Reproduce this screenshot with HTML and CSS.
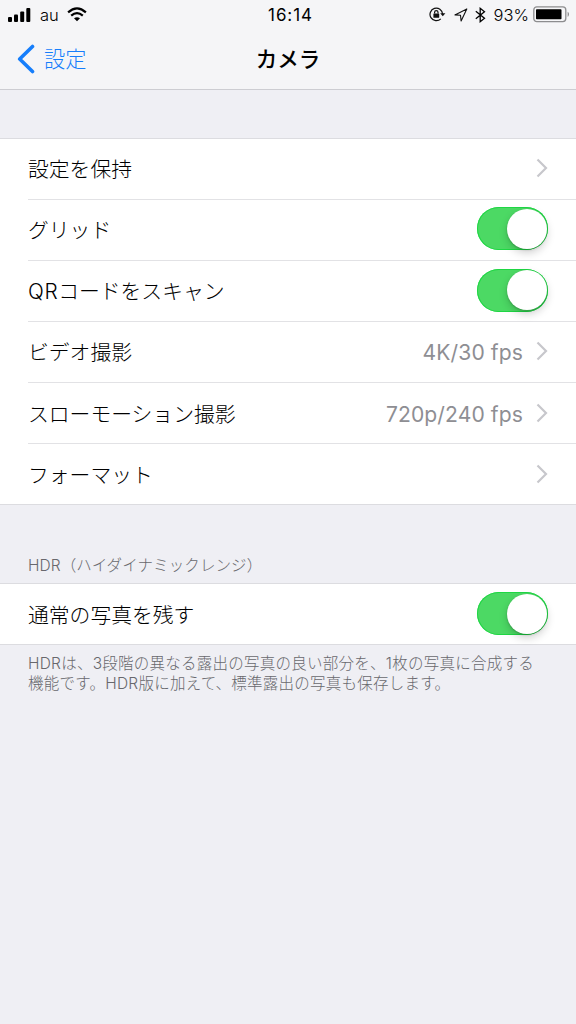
FILE: index.html
```html
<!DOCTYPE html>
<html lang="ja">
<head>
<meta charset="utf-8">
<title>カメラ</title>
<link rel="stylesheet" href="styles.css">
</head>
<body>
<header class="header">
  <div class="status">
    <div class="status-side">
      <svg class="signal" width="24" height="14" viewBox="0 0 24 14"><rect x="0" y="9" width="4" height="5" rx="1"/><rect x="6" y="6.500" width="4" height="7.500" rx="1"/><rect x="12.200" y="3.500" width="4" height="10.500" rx="1"/><rect x="18.300" y="0" width="4" height="14" rx="1"/></svg>
      <span class="carrier">au</span>
      <svg class="wifi" width="20" height="15" viewBox="0 0 20 15" fill="none" stroke="#000" stroke-width="2.200"><path d="M1.100 5.400Q10-2.700 18.900 5.400M4.200 8.700Q10 3.600 15.800 8.700"/><path d="M10 14.300L7 11.300Q10 9 13 11.300Z" fill="#000" stroke="none"/></svg>
    </div>
    <span class="clock">16:14</span>
    <div class="status-side status-end">
      <svg class="lock" width="17" height="15" viewBox="0 0 17 15" fill="none" stroke="#111" stroke-width="1.200"><path d="M11.800 11.800A6.300 6.300 0 1 1 13.600 7"/><path d="M11.200 6.200H16.400L13.800 9.200Z" fill="#111" stroke="none"/><rect x="4.400" y="6.400" width="5.800" height="4.300" rx=".5" fill="#111" stroke="none"/><path d="M5.600 6.600V5.300a1.700 1.700 0 0 1 3.400 0V6.600"/></svg>
      <svg class="location" width="14" height="14" viewBox="0 0 14 14" fill="none" stroke="#111" stroke-width="1.100" stroke-linejoin="round"><path d="M.9 6.900L12.800.9L7.100 13L6.500 7.200Z"/></svg>
      <svg class="bluetooth" width="11" height="16" viewBox="0 0 11 16" fill="none" stroke="#000" stroke-width="1.300"><path d="M.8 4.200L9.500 11.300L5.200 14.700V1.300L9.500 4.700L.8 11.800"/></svg>
      <span class="percent">93%</span>
      <svg class="battery" width="37" height="17" viewBox="0 0 37 17"><rect x=".8" y=".9" width="32" height="14.700" rx="3" fill="none" stroke="#8d8d8f" stroke-width="1.300"/><rect x="3" y="3.300" width="25.500" height="9.900" rx=".8"/><path d="M34.600 5.700C36.500 6.500 36.500 10 34.600 10.800Z" fill="#8d8d8f"/></svg>
    </div>
  </div>
  <nav class="nav">
    <a class="back"><svg width="18" height="30" viewBox="0 0 18 30" fill="none" stroke="#167efb" stroke-width="3.600" stroke-linecap="round" stroke-linejoin="round"><path d="M15.500 2.500L2.700 15L15.500 27.500"/></svg><span>設定</span></a>
    <h1 class="title">カメラ</h1>
  </nav>
</header>
<main>
  <section class="group">
    <div class="row"><span class="label">設定を保持</span><svg class="chevron" viewBox="0 0 12 20"><path d="M1.500 1.500L10 10L1.500 18.500"/></svg></div>
    <div class="row"><span class="label">グリッド</span><span class="switch"><span class="knob"></span></span></div>
    <div class="row"><span class="label"><span class="latin">QR</span>コードをスキャン</span><span class="switch"><span class="knob"></span></span></div>
    <div class="row"><span class="label">ビデオ撮影</span><span class="value">4K/30 fps</span><svg class="chevron" viewBox="0 0 12 20"><path d="M1.500 1.500L10 10L1.500 18.500"/></svg></div>
    <div class="row"><span class="label">スローモーション撮影</span><span class="value">720p/240 fps</span><svg class="chevron" viewBox="0 0 12 20"><path d="M1.500 1.500L10 10L1.500 18.500"/></svg></div>
    <div class="row"><span class="label">フォーマット</span><svg class="chevron" viewBox="0 0 12 20"><path d="M1.500 1.500L10 10L1.500 18.500"/></svg></div>
  </section>
  <h2 class="caption">HDR（ハイダイナミックレンジ）</h2>
  <section class="group">
    <div class="row"><span class="label">通常の写真を残す</span><span class="switch"><span class="knob"></span></span></div>
  </section>
  <p class="note">HDRは、3段階の異なる露出の写真の良い部分を、1枚の写真に合成する<br>機能です。HDR版に加えて、標準露出の写真も保存します。</p>
</main>
</body>
</html>
```
FILE: styles.css
```css
* { box-sizing: border-box; }
body {
  margin: 0;
  min-height: 1024px;
  background: #efeff4;
  color: #000;
  font-family: Inter, "Noto Sans CJK JP", sans-serif;
  font-weight: 300;
}
svg { display: block; flex: none; }
.header {
  height: 90px;
  background: #f5f5f7;
  border-bottom: 1px solid #cdcdd2;
}
.status {
  display: grid;
  grid-template-columns: 1fr auto 1fr;
  align-items: center;
  height: 29px;
  padding: 0 6px 0 8px;
  font-size: 17px;
  line-height: 29px;
}
.status-side { display: flex; align-items: center; }
.status-end { justify-content: flex-end; }
.carrier { margin: 1px 8px 0 8px; font-size: 16.500px; }
.signal, .wifi { margin-bottom: 1px; }
.clock { padding: 1px 0 0 3px; font-weight: 400; font-size: 17px; letter-spacing: .9px; }
.lock, .location { margin-bottom: 1px; }
.location { margin-left: 8px; }
.bluetooth { margin-left: 7px; margin-bottom: 1px; }
.percent { margin: 1px 4px 0 8px; font-size: 16.500px; }
.battery { margin-bottom: 1px; }
.nav {
  display: grid;
  grid-template-columns: 1fr auto 1fr;
  align-items: center;
  height: 60px;
  padding: 0 17px;
}
.back {
  display: flex;
  align-items: center;
  gap: 9px;
  color: #167efb;
  font-size: 21.200px;
  line-height: 30px;
}
.title { margin: 0; font-size: 21.500px; font-weight: 500; line-height: 30px; }
.group {
  background: #fff;
  border-top: 1px solid #dcdce0;
  border-bottom: 1px solid #dcdce0;
}
main { padding-top: 47.500px; }
.row {
  display: flex;
  align-items: center;
  height: 61.200px;
  margin-left: 28px;
  padding-right: 28px;
  border-bottom: 1px solid #e2e2e5;
}
.row:first-child { height: 61px; }
.row:last-child { height: 60px; border-bottom: 0; }
.label { flex: 1; padding-top: 3px; font-size: 20.800px; line-height: 30px; }
.latin { letter-spacing: .6px; }
.value { padding-top: 2px; color: #8e8e93; font-size: 21.100px; font-weight: 380; letter-spacing: .1px; margin-right: 13px; }
.chevron {
  width: 12px;
  height: 20px;
  margin-bottom: 1px;
  fill: none;
  stroke: #c7c7cc;
  stroke-width: 2.200;
}
.switch {
  display: flex;
  justify-content: flex-end;
  width: 71px;
  height: 43px;
  margin-bottom: 1.500px;
  padding: 1.500px;
  border-radius: 22px;
  background: #4cd964;
  box-shadow: inset 0 0 0 1px #1fd744;
}
.knob {
  width: 40px;
  height: 40px;
  border-radius: 50%;
  background: #fff;
  box-shadow: 0 4px 9px rgba(0,0,0,.18), 0 1px 2px rgba(0,0,0,.2);
}
.caption {
  margin: 0;
  height: 78px;
  padding: 49px 28px 0;
  color: #68686d;
  font-size: 15.500px;
  font-weight: 300;
  line-height: 24px;
  letter-spacing: .1px;
}
.note {
  margin: 0;
  padding: 9px 28px 0;
  color: #68686d;
  font-size: 15.500px;
  line-height: 19.500px;
  letter-spacing: .25px;
  white-space: nowrap;
}
```
